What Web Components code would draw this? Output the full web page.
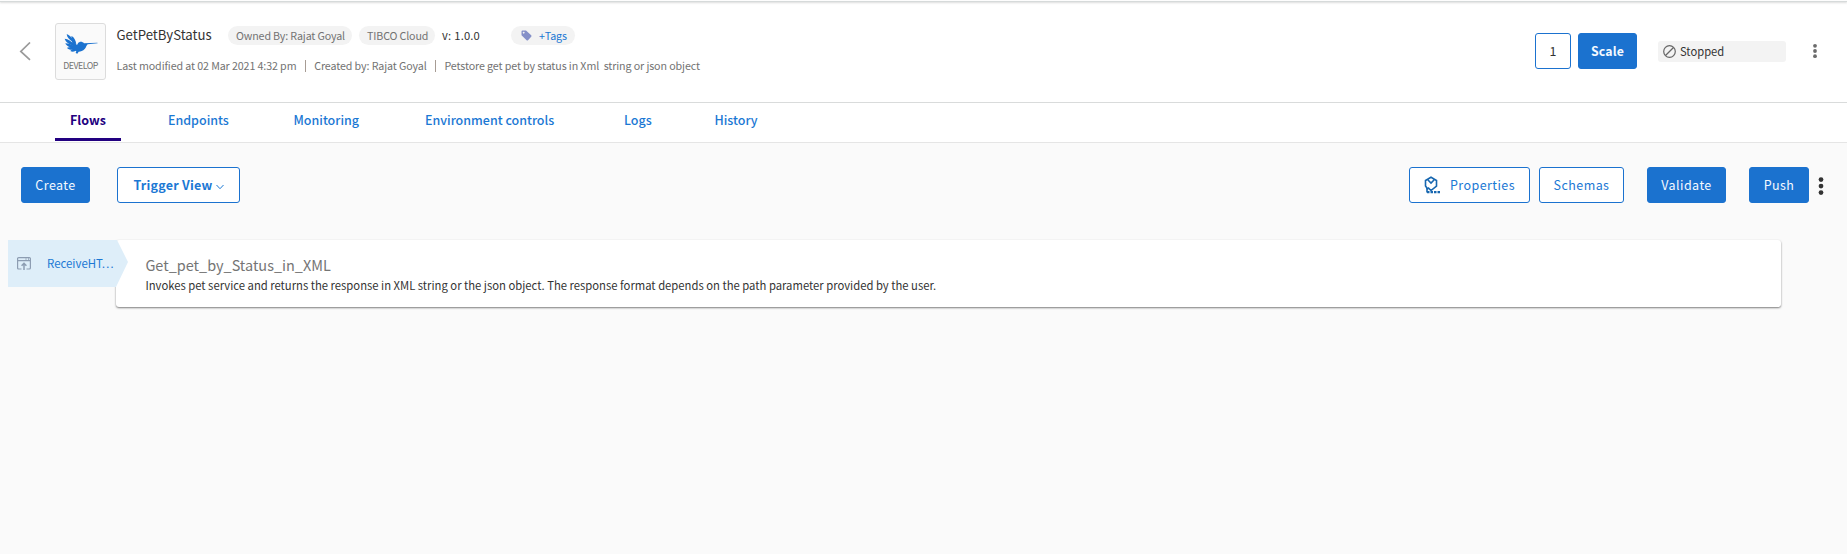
<!DOCTYPE html>
<html lang="en">
<head>
<meta charset="utf-8">
<title>GetPetByStatus</title>
<style>
html,body{margin:0;height:100%;background:#fafafa}
body{font-family:"Noto Sans CJK SC","Noto Sans",sans-serif;color:#333}
</style>
</head>
<body>
<app-page></app-page>
<script>
const define = (name, html) => customElements.define(name, class extends HTMLElement {
  constructor() {
    super();
    const t = document.createElement('template');
    t.innerHTML = html;
    this.attachShadow({mode: 'open'}).append(t.content.cloneNode(true));
  }
});

define('ui-pill', `<style>
:host{display:flex;align-items:center;box-sizing:border-box;height:19px;border-radius:10px;background:#f3f3f3;color:#727272;font-size:10.7px;letter-spacing:-.14px;line-height:19px;white-space:nowrap;padding:0 0 0 8px}
</style><slot></slot>`);

define('ui-button', `<style>
:host{display:flex;align-items:center;justify-content:center;box-sizing:border-box;height:36px;border:1px solid #1b72cf;border-radius:3px;background:#1b72cf;color:#f4f9ff;font-size:12.5px;letter-spacing:.43px;line-height:20px;white-space:nowrap}
:host([outline]){background:#fff;color:#1b78d4}
:host([strong]){font-weight:700;font-size:12.3px;letter-spacing:.15px}
</style><slot></slot>`);

define('ui-kebab', `<style>
:host{display:block;width:8px;height:20px}svg{display:block;width:100%;height:100%}
</style><svg viewBox="0 0 8 20" fill="currentColor"><circle cx="4" cy="4.800" r="1.9"/><circle cx="4" cy="10" r="1.9"/><circle cx="4" cy="15.200" r="1.9"/></svg>`);

define('app-logo', `<style>
:host{display:flex;flex-direction:column;align-items:center;box-sizing:border-box;width:51px;height:57px;border:1px solid #dcdcdc;border-radius:3px;background:#fafafa;color:#727272;font-size:8.8px;letter-spacing:-.5px;line-height:14px}
svg{display:block;margin:10px 0 4.500px}
</style>
<svg width="34" height="20" viewBox="190 100 102 60" fill="#1b72cf">
<path d="M198 101C207 103 216 112 220 125L216 124C207 118 199 110 198 101Z"/>
<path d="M212 106C220 109 225 118 227 131L219 127C216 120 212 113 212 106Z"/>
<path d="M192 114C202 115 212 122 221 130L219 135C207 132 195 125 192 114Z"/>
<path d="M194 128C203 128 213 132 221 136L218 141C207 141 197 136 194 128Z"/>
<path d="M199 141C207 139 214 139 221 139L221 146C212 149 203 147 199 141Z"/>
<path d="M209 151C214 145 220 142 226 143L228 148C222 154 214 154 209 151Z"/>
<path d="M214 119L229 133L232 128C236 122 245 122 250 128L290 126.500L291 128L261 131C257 134 257 140 252 145C247 151 240 152 234 153L230 159L225 157L227 151L216 145Z"/>
</svg><slot></slot>`);

define('app-header', `<style>
:host{display:flex;box-sizing:border-box;height:103px;border-bottom:1px solid #d9dbdb;background:#fff}
.back{margin:42px 0 0 19px;width:36px;height:19px}
app-logo{margin-top:23px}
.info{flex:1;margin:25px 0 0 10.500px}
.row{display:flex;align-items:center;height:20px;white-space:pre}
h1{margin:0;font-size:13.2px;font-weight:400;line-height:20px;color:#333;width:111.500px}
.ver{margin-left:7px;width:69px;font-size:11.2px;letter-spacing:.15px;word-spacing:.4px;line-height:20px;color:#333}
.meta{margin-top:11px;font-size:10.7px;letter-spacing:-.11px;line-height:20px;color:#727272}
.meta i{width:1px;height:12px;margin:0 8.400px;background:#a79c94}
.tags{padding-left:10px;color:#1b78d4}
.tags svg{margin-right:7px}
.num{width:36px;margin:33px 7px 0 0;color:#333;letter-spacing:0}
.scale{width:59px;margin-top:33px}
.status{display:flex;align-items:center;box-sizing:border-box;width:128px;height:21px;margin:41px 25px 0 21px;padding-left:5px;border-radius:3px;background:#f3f3f3;color:#333;font-size:11.2px;line-height:21px}
.status svg{margin-right:4px}
ui-kebab{margin:41px 28px 0 0;color:#6b6b6b}
</style>
<svg class="back" viewBox="0 0 36 19" fill="none" stroke="#9a9a9a" stroke-width="1.7"><path d="M11 .5L1.800 9.500L11 17.800"/></svg>
<app-logo>DEVELOP</app-logo>
<div class="info">
 <div class="row"><h1>GetPetByStatus</h1><ui-pill style="width:124px">Owned By: Rajat Goyal</ui-pill><ui-pill style="width:76px;margin-left:7px">TIBCO Cloud</ui-pill><span class="ver">v: 1.0.0</span><ui-pill class="tags" style="width:64px"><svg width="11" height="11" viewBox="0 0 11 11"><path fill="#8590c8" fill-rule="evenodd" d="M.5 1.500Q.5.5 1.500.5H5L10.200 5.300Q10.900 6 10.200 6.700L7 10.200Q6.300 10.900 5.600 10.200L.5 5.200ZM2.700 1.700a.9.9 0 1 0 .01 0Z"/></svg>+Tags</ui-pill></div>
 <div class="row meta"><span>Last modified at 02 Mar 2021 4:32 pm</span><i></i><span>Created by: Rajat Goyal</span><i></i><span>Petstore get pet by status in Xml  string or json object</span></div>
</div>
<ui-button class="num" outline>1</ui-button>
<ui-button class="scale" strong>Scale</ui-button>
<div class="status"><svg width="13" height="13" viewBox="0 0 13 13" fill="none" stroke="#666" stroke-width="1.200"><circle cx="6.500" cy="6.500" r="5.800"/><path d="M2.500 10.500L10.500 2.500"/></svg>Stopped</div>
<ui-kebab></ui-kebab>`);

define('ui-tab', `<style>
:host{display:block;color:#1b78d4;font-size:12.470px;font-weight:500;line-height:20px;white-space:nowrap}
span{display:block;padding-top:7px;height:28px}
:host([active]){color:#220080;font-weight:700}
:host([active])::after{content:"";display:block;width:66px;height:3px;margin-left:-15px;background:#220080}
</style><span><slot></slot></span>`);

define('app-tabs', `<style>
:host{display:grid;grid-template-columns:98px 125.500px 131.500px 199px 90.500px auto;box-sizing:border-box;height:40px;padding-left:70px;border-bottom:1px solid #e5e5e5;background:#fff}
</style><slot></slot>`);

define('app-toolbar', `<style>
:host{display:flex;align-items:center;height:36px;margin:24px 0 0 21px}
.space{flex:1}
ui-kebab{width:10px;height:26px;margin:1px 21px 0 7px;color:#333}
</style>
<ui-button style="width:69px;margin-right:27px">Create</ui-button>
<ui-button outline strong style="width:123px;font-size:12.500px;letter-spacing:.25px">Trigger View<svg width="8" height="6" viewBox="0 0 8 6" fill="none" stroke="#1b78d4" style="margin:3px 0 0 3px"><path d="M.5 1L4 4.700L7.500 1"/></svg></ui-button>
<div class="space"></div>
<ui-button outline style="width:121px;margin-right:9px"><svg width="17" height="18" viewBox="0 0 17 18" fill="none" stroke="#1767b0" stroke-width="1.600" style="margin-right:9px"><path d="M4 13.500L1.500 10V4.500L7 1.200L12.500 4.500V10L7 14.500L4 11.500M4 4L7 7L10 4"/><path d="M3 12V16.500"/><path d="M3 16.200H16" stroke-width="2.200" stroke-dasharray="2.500 1"/></svg>Properties</ui-button>
<ui-button outline style="width:85px;margin-right:23px">Schemas</ui-button>
<ui-button style="width:79px;margin-right:23px">Validate</ui-button>
<ui-button style="width:60px">Push</ui-button>
<ui-kebab></ui-kebab>`);

define('flow-trigger', `<style>
:host{display:flex;align-items:center;box-sizing:border-box;width:120px;height:47px;margin-right:-12px;padding:0 0 2px 9px;background:#deeef9;clip-path:polygon(0 0,109px 0,120px 22px,108px 100%,0 100%);color:#1b78d4;font-size:11.450px;line-height:20px;z-index:1;white-space:nowrap}
svg{margin:2px 16px 0 0}
</style><svg width="14" height="13" viewBox="0 0 14 13" fill="none" stroke="#8d9db2" stroke-width="1.200"><path d="M4.500 12H1.700Q.6 12 .6 11V1.600Q.6.6 1.700.6H12.300Q13.400.6 13.400 1.600V11Q13.400 12 12.300 12H9.500M.6 3.600H13.400M8.500 2.100H9.500M11 2.100H12"/><path d="M7 13V7M4.600 8.800L7 6.300L9.400 8.800" stroke-width="1.500"/></svg><slot></slot>`);

define('flow-card', `<style>
:host{display:block;box-sizing:border-box;width:1665px;height:67px;padding:15px 0 0 29.400px;border-radius:3px;background:#fff;box-shadow:0 1px 2px rgba(0,0,0,.5)}
h2{margin:0;font-size:14.480px;font-weight:400;line-height:20px;color:#757575}
p{margin:0;font-size:11.270px;line-height:20px;color:#333}
</style><h2><slot name="title"></slot></h2><p><slot></slot></p>`);

define('app-page', `<style>
:host{display:flex;flex-direction:column;height:554px;overflow:hidden;background:#fafafa}
.top{position:absolute;left:0;right:0;top:1px;height:1px;background:#d6dada;box-shadow:0 1px 2px rgba(0,0,0,.2)}
.flow{display:flex;align-items:flex-start;margin:37px 0 0 8px}
</style>
<div class="top"></div>
<app-header></app-header>
<app-tabs><ui-tab active>Flows</ui-tab><ui-tab>Endpoints</ui-tab><ui-tab>Monitoring</ui-tab><ui-tab>Environment controls</ui-tab><ui-tab>Logs</ui-tab><ui-tab>History</ui-tab></app-tabs>
<app-toolbar></app-toolbar>
<div class="flow"><flow-trigger>ReceiveHT…</flow-trigger><flow-card><span slot="title">Get_pet_by_Status_in_XML</span>Invokes pet service and returns the response in XML string or the json object. The response format depends on the path parameter provided by the user.</flow-card></div>`);
</script>
</body>
</html>
